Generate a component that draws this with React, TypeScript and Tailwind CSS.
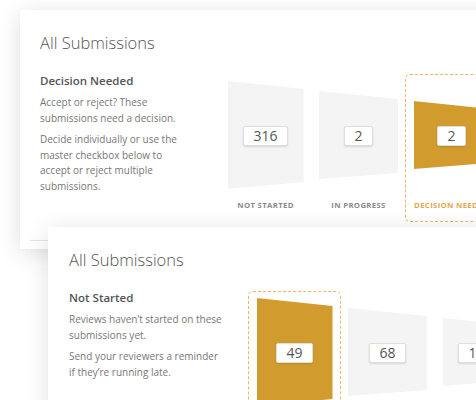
import {FC, Fragment} from "react";

type Step = {
    label: string
    count: string
}

interface CardProps {
    heading: string
    lines: string[][]
    steps: Step[]
    active: number
    className?: string
    children?: React.ReactNode
}

// bar shapes, in a 108px tall frame, narrowing step by step
const shapes = [
    {w: "w-[76px]", clip: "[clip-path:polygon(0_0,100%_8px,100%_101px,0_108px)]"},
    {w: "w-[79px]", clip: "[clip-path:polygon(0_10px,100%_18px,100%_92px,0_98px)]"},
    {w: "w-[76px]", clip: "[clip-path:polygon(0_20px,100%_28px,100%_82px,0_88px)]"},
];

const Funnel:FC<{steps: Step[], active: number}> = ({steps, active}) => {
    return (
        <div className="flex mt-[1px]">
            {steps.map((s, i) => {
                const on = i === active;
                return (
                    <div
                        key={s.label}
                        className={
                            "w-[93px] shrink-0 flex flex-col items-center pt-[6px] pb-[10px] rounded-[5px] border border-dashed " +
                            (on ? "border-[#eab862]" : "border-transparent")
                        }
                    >
                        <div className={"relative h-[108px] flex items-center justify-center " + shapes[i].w}>
                            <div
                                className={
                                    "absolute inset-0 " + shapes[i].clip + " " +
                                    (on ? "bg-[#d29b2e]" : "bg-[#f4f4f4]")
                                }
                            />
                            <div className="relative mt-[2px] bg-white border border-[#dedede] rounded-[2px] px-[9px] text-[14px] leading-[18px] text-[#555] shadow-[0_1px_2px_rgba(0,0,0,0.12)]">
                                {s.count}
                            </div>
                        </div>
                        <div
                            className={
                                "mt-[10px] text-[7.8px] leading-[12px] font-bold tracking-[0.04em] whitespace-nowrap " +
                                (on ? "text-[#e0a94c]" : "text-[#8a8a8a]")
                            }
                        >
                            {s.label}
                        </div>
                    </div>
                )
            })}
        </div>
    )
}

const Card:FC<CardProps> = ({heading, lines, steps, active, className, children}: CardProps) => {
    return (
        <div className={"relative bg-white pt-[21px] shadow-[0_4px_22px_rgba(0,0,0,0.13)] " + (className ?? "")}>
            <h1 className="text-[16.5px] leading-[24px] text-[#555] font-light">All Submissions</h1>
            <div className="flex mt-[18px]">
                <div className="w-[179px] shrink-0">
                    <h2 className="text-[11.5px] leading-[16px] font-semibold text-[#555]">{heading}</h2>
                    {lines.map((p, i) => (
                        <p key={i} className="mt-[6px] text-[10px] leading-[15.6px] text-[#777] whitespace-nowrap">
                            {p.map((l, j) => (
                                <Fragment key={j}>
                                    {j > 0 && <br/>}
                                    {l}
                                </Fragment>
                            ))}
                        </p>
                    ))}
                </div>
                <Funnel steps={steps} active={active}/>
            </div>
            {children}
        </div>
    )
}

const App:FC = () => {
    return (
        <div className="w-[476px] h-[400px] overflow-hidden bg-white font-['Open_Sans',sans-serif]">
            <div className="pt-[10px] pl-[20px]">
                <Card
                    className="w-[540px] h-[239px] pl-[20px]"
                    heading="Decision Needed"
                    lines={[
                        ["Accept or reject? These", "submissions need a decision."],
                        ["Decide individually or use the", "master checkbox below to", "accept or reject multiple", "submissions."],
                    ]}
                    steps={[
                        {label: "NOT STARTED", count: "316"},
                        {label: "IN PROGRESS", count: "2"},
                        {label: "DECISION NEEDED", count: "2"},
                    ]}
                    active={2}
                >
                    {/* start of the list under the funnel, mostly hidden by the next card */}
                    <div className="absolute left-[10px] right-0 top-[230px] border-t border-[#e4e4e4]"/>
                </Card>
            </div>
            <div className="-mt-[22px] ml-[48px]">
                <Card
                    className="w-[480px] h-[200px] pl-[21px]"
                    heading="Not Started"
                    lines={[
                        ["Reviews haven’t started on these", "submissions yet."],
                        ["Send your reviewers a reminder", "if they’re running late."],
                    ]}
                    steps={[
                        {label: "NOT STARTED", count: "49"},
                        {label: "IN PROGRESS", count: "68"},
                        {label: "DECISION NEEDED", count: "112"},
                    ]}
                    active={0}
                />
            </div>
        </div>
    )
}

export default App;
